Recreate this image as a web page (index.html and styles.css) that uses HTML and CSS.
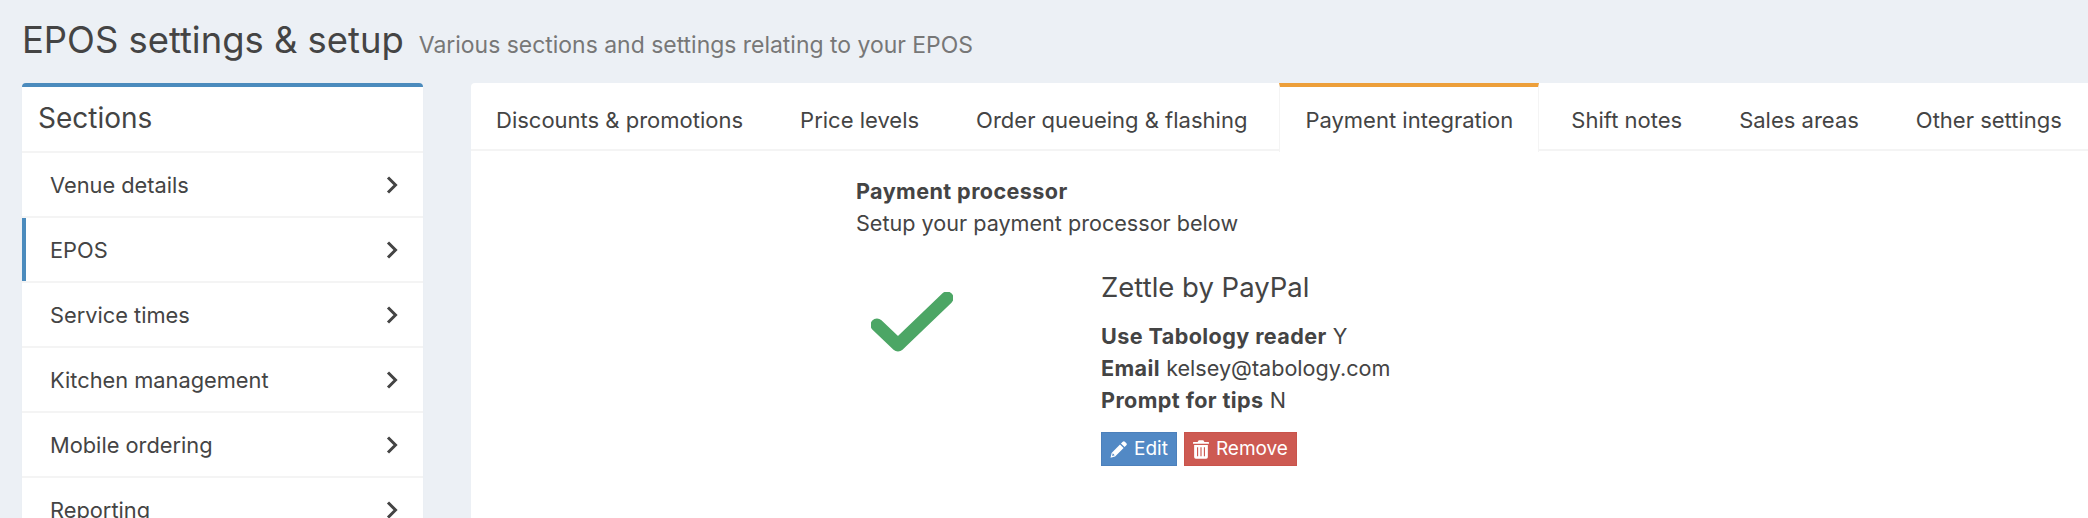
FILE: index.html
```html
<!DOCTYPE html>
<html lang="en">
<head>
<meta charset="utf-8">
<title>EPOS settings &amp; setup</title>
<link rel="stylesheet" href="styles.css">
</head>
<body>
<div class="page">
  <header class="page-head">
    <h1>EPOS settings &amp; setup</h1>
    <small>Various sections and settings relating to your EPOS</small>
  </header>
  <div class="columns">
    <aside class="sections">
      <h2>Sections</h2>
      <a class="row"><span>Venue details</span><svg class="chev" viewBox="0 0 12 18"><path d="M2 1.500 9.500 9 2 16.500"/></svg></a>
      <a class="row active"><span>EPOS</span><svg class="chev" viewBox="0 0 12 18"><path d="M2 1.500 9.500 9 2 16.500"/></svg></a>
      <a class="row"><span>Service times</span><svg class="chev" viewBox="0 0 12 18"><path d="M2 1.500 9.500 9 2 16.500"/></svg></a>
      <a class="row"><span>Kitchen management</span><svg class="chev" viewBox="0 0 12 18"><path d="M2 1.500 9.500 9 2 16.500"/></svg></a>
      <a class="row"><span>Mobile ordering</span><svg class="chev" viewBox="0 0 12 18"><path d="M2 1.500 9.500 9 2 16.500"/></svg></a>
      <a class="row"><span>Reporting</span><svg class="chev" viewBox="0 0 12 18"><path d="M2 1.500 9.500 9 2 16.500"/></svg></a>
    </aside>
    <main class="panel">
      <nav class="tabs">
        <a class="tab">Discounts &amp; promotions</a>
        <a class="tab">Price levels</a>
        <a class="tab">Order queueing &amp; flashing</a>
        <a class="tab current">Payment integration</a>
        <a class="tab">Shift notes</a>
        <a class="tab">Sales areas</a>
        <a class="tab">Other settings</a>
      </nav>
      <section class="body">
        <p class="intro"><strong>Payment processor</strong><br>Setup your payment processor below</p>
        <div class="processor">
          <div class="tick">
            <svg viewBox="0 0 82 62" width="82" height="62"><path d="M6 33l21 20L76 6"/></svg>
          </div>
          <div class="details">
            <h3>Zettle by PayPal</h3>
            <p><strong>Use Tabology reader</strong> Y<br><strong>Email</strong> kelsey@tabology.com<br><strong>Prompt for tips</strong> N</p>
            <div class="actions">
              <a class="btn edit"><svg viewBox="0 0 16 16" width="17" height="17"><path d="M12 .6a1.500 1.500 0 0 1 2 0l1.400 1.400a1.500 1.500 0 0 1 0 2l-1.700 1.700-3.400-3.400zM9.400 3.200l3.400 3.400-8 8-4.300 1.200 1-4.500zM2.600 11.600l-.6 2.400 2.400-.6z" fill-rule="evenodd"/></svg>Edit</a>
              <a class="btn remove"><svg viewBox="0 0 14 16" width="16" height="19"><path d="M5 0h4l1 1.500h3.500a.5.5 0 0 1 .5.500v1H0V2a.5.500 0 0 1 .5-.5H4zM1 4h12v10.500A1.500 1.500 0 0 1 11.500 16h-9A1.500 1.500 0 0 1 1 14.500zM3.500 6v8h1V6zM6.500 6v8h1V6zM9.500 6v8h1V6z" fill-rule="evenodd"/></svg>Remove</a>
            </div>
          </div>
        </div>
      </section>
    </main>
  </div>
</div>
</body>
</html>
```
FILE: styles.css
```css
* { box-sizing: border-box; }
html, body { margin: 0; height: 518px; overflow: hidden; }
body {
  background: #ecf0f5;
  color: #444;
  font-family: Inter, "Liberation Sans", sans-serif;
  font-size: 20px;
  line-height: 32px;
}
.page { padding: 15px 0 0 22px; }
.page-head {
  display: flex;
  align-items: baseline;
  gap: 15px;
  height: 68px;
}
.page-head h1 { margin: 0; font-size: 36.400px; line-height: 50px; font-weight: 400; white-space: nowrap; }
.page-head small { font-size: 22.950px; color: #777; }
.columns { display: flex; gap: 48px; align-items: flex-start; }
.sections {
  flex: 0 0 401px;
  height: 440px;
  background: #fff;
  border-top: 4px solid #4b8bbd;
  border-radius: 4px 4px 0 0;
  box-shadow: 0 1px 1px rgba(0,0,0,.05);
}
.sections h2 {
  margin: 0;
  height: 66px;
  padding: 0 16px;
  font-size: 28px;
  line-height: 62px;
  font-weight: 400;
  border-bottom: 2px solid #f4f4f4;
}
.row {
  display: flex;
  align-items: center;
  justify-content: space-between;
  height: 65px;
  padding: 0 25px 0 28px;
  border-bottom: 2px solid #f4f4f4;
  font-size: 21.800px;
}
.row.active { box-shadow: inset 4px 0 0 #4b8bbd; }
.chev { width: 12px; height: 18px; fill: none; stroke: #444; stroke-width: 3; }
.panel { flex: 1; height: 440px; background: #fff; border-radius: 4px 0 0 0; overflow: hidden; }
.tabs {
  display: flex;
  height: 68px;
  border-bottom: 2px solid #f4f4f4;
}
.tab {
  margin-right: 7px;
  padding: 5px 25px 0;
  font-size: 22px;
  line-height: 64px;
  white-space: nowrap;
}
.tab.current {
  height: 69px;
  padding: 1px 25px 0;
  border: 1px solid #f4f4f4;
  border-top: 4px solid #ed9f3a;
  border-bottom: 0;
  background: #fff;
}
.body { padding: 24px 0 0 385px; font-size: 21.600px; }
.body strong { letter-spacing: .4px; }
.intro { margin: 0; }
.processor { display: flex; margin-top: 28px; }
.tick { flex: 0 0 245px; padding: 25px 0 0 15px; }
.tick path { fill: none; stroke: #4ca665; stroke-width: 13; stroke-linecap: round; stroke-linejoin: round; }
.details h3 { margin: 0 0 13px; font-size: 27.500px; line-height: 40px; font-weight: 400; }
.details p { margin: 0; }
.actions { display: flex; gap: 7px; margin-top: 16px; }
.btn {
  display: flex;
  align-items: center;
  gap: 7px;
  height: 34px;
  padding: 0 8px;
  color: #fff;
  font-size: 19px;
  border: 1px solid;
}
.btn svg { fill: #fff; }
.edit { background: #5289c5; border-color: #4c80bb; }
.remove { background: #cd5a52; border-color: #c9534b; }
```
